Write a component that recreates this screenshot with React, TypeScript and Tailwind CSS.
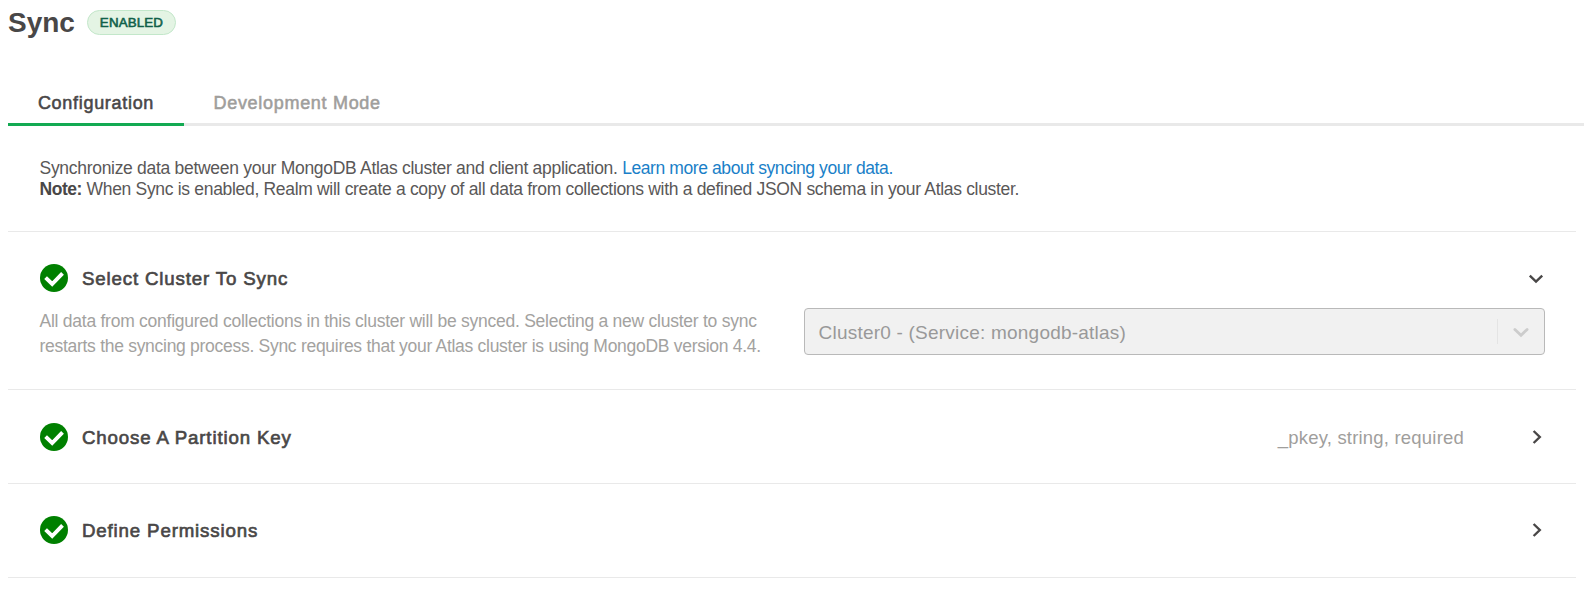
import type { ReactNode } from "react";

function CheckBadge() {
  return (
    <svg className="size-7 shrink-0" viewBox="0 0 28 28" aria-hidden="true">
      <circle cx="14" cy="14" r="14" fill="#008000" />
      <path d="M5.6 13.6 12.2 20 22.5 9.4" fill="none" stroke="#fff" strokeWidth="3.9" />
    </svg>
  );
}

function Chevron({ open = false }: { open?: boolean }) {
  return (
    <svg className="h-4 w-4 shrink-0" viewBox="0 0 16 16" fill="none" stroke="#494747" strokeWidth="2.4" aria-hidden="true">
      {open ? <path d="M1.8 5.6 8 11.6 14.2 5.6" /> : <path d="M5.6 2 11.8 8 5.6 14" />}
    </svg>
  );
}

function StepHeader({ title, summary, open }: { title: ReactNode; summary?: ReactNode; open?: boolean }) {
  return (
    <div className="flex h-7 items-center">
      <CheckBadge />
      <h2 className="ml-3.5 flex-1 pt-0.5 text-[18.7px] leading-7 tracking-[0.84px] [-webkit-text-stroke:0.65px]">{title}</h2>
      {summary}
      <Chevron open={open} />
    </div>
  );
}

export default function App() {
  return (
    <div className="h-[603px] overflow-hidden bg-white pl-2 font-['Liberation_Sans',Arial,sans-serif] text-[#494747]">
      <header className="flex h-[46px] items-center">
        <h1 className="text-[28px] leading-[46px] font-bold">Sync</h1>
        <span className="-mt-0.5 ml-3 flex h-[25px] w-[89px] items-center justify-center rounded-full border border-[#c3e7ca] bg-[#e4f4e4] pt-px text-[13.3px] tracking-[0.15px] text-[#116149] [-webkit-text-stroke:0.6px]">
          ENABLED
        </span>
      </header>
      <nav className="mt-[34px] flex h-[46px] border-b-3 border-[#e9e9e9] text-[18px] leading-[46px] tracking-[0.7px] [-webkit-text-stroke:0.55px]">
        <a className="-mb-[3px] h-[46px] w-44 border-b-3 border-[#13aa52] text-center">Configuration</a>
        <a className="ml-[29.5px] text-[#9f9e9c]">Development Mode</a>
      </nav>
      <main className="mr-2">
        <p className="h-[106px] border-b border-[#e9e9e9] pt-8 pl-[31.5px] text-[17.5px] leading-[21px] whitespace-nowrap text-[#5a5858]">
          <span className="tracking-[-0.295px]">Synchronize data between your MongoDB Atlas cluster and client application. </span>
          <a className="tracking-[-0.41px] text-[#1a7fc8]">Learn more about syncing your data.</a>
          <br />
          <span className="tracking-[-0.313px]">
            <b className="tracking-[-0.45px] text-[#494747]">Note:</b> When Sync is enabled, Realm will create a copy of all data from collections with a defined JSON schema in your Atlas cluster.
          </span>
        </p>
        <section className="h-[158px] border-b border-[#e9e9e9] px-8 pt-8">
          <StepHeader title="Select Cluster To Sync" open />
          <div className="flex justify-between">
            <p className="-ml-[0.5px] pt-[17px] text-[17.5px] leading-[25px] whitespace-nowrap text-[#a3a2a0]">
              <span className="tracking-[-0.25px]">All data from configured collections in this cluster will be synced. Selecting a new cluster to sync</span>
              <br />
              <span className="tracking-[-0.285px]">restarts the syncing process. Sync requires that your Atlas cluster is using MongoDB version 4.4.</span>
            </p>
            <div className="mt-4 -mr-px flex h-[47px] w-[741px] items-center rounded border border-[#b9b9b9] bg-[#f1f1f1] pl-[13.5px] text-[19px] tracking-[0.22px] text-[#999]">
              <span className="flex-1 pt-[3px]">Cluster0 - (Service: mongodb-atlas)</span>
              <span className="h-[25px] w-px bg-[#e4e4e4]" />
              <svg className="mr-[15px] ml-[15px] size-4" viewBox="0 0 16 16" fill="none" stroke="#ccc" strokeWidth="2.8" strokeLinecap="round" aria-hidden="true">
                <path d="M1.9 5.4 8 11.2 14.1 5.4" />
              </svg>
            </div>
          </div>
        </section>
        <section className="h-[94px] border-b border-[#e9e9e9] px-8 pt-[33px]">
          <StepHeader
            title="Choose A Partition Key"
            summary={<span className="mr-16 pt-0.5 text-[18.5px] tracking-[0.2px] text-[#9f9e9c]">_pkey, string, required</span>}
          />
        </section>
        <section className="h-[94px] border-b border-[#e9e9e9] px-8 pt-8">
          <StepHeader title="Define Permissions" />
        </section>
      </main>
    </div>
  );
}
